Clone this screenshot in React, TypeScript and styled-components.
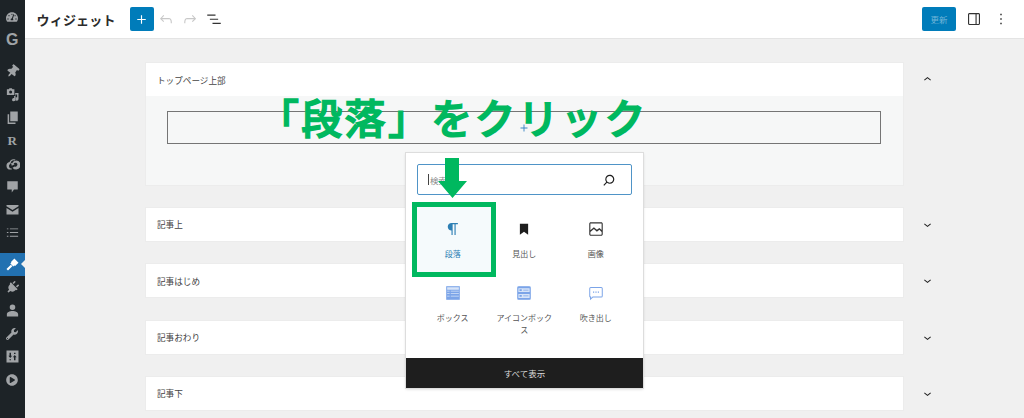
import * as React from "react";
import styled, { createGlobalStyle } from "styled-components";
import { FaTachometerAlt, FaThumbtack, FaPlug, FaWrench, FaPlayCircle } from "react-icons/fa";

const GlobalStyle = createGlobalStyle`
  html, body {
    margin: 0;
    padding: 0;
    background: #f0f0f0;
    font-family: "Noto Sans CJK JP", "Noto Sans", sans-serif;
  }
`;

const Page = styled.div`
  position: relative;
  display: flex;
  width: 1024px;
  height: 418px;
  overflow: hidden;
`;

const Sidebar = styled.nav`
  flex: 0 0 24.5px;
  display: flex;
  flex-direction: column;
  padding-top: 5px;
  background: #1d2327;
`;

const SideItem = styled.div<{ $active?: boolean; $gap?: boolean }>`
  position: relative;
  height: 23px;
  margin-top: ${(p) => (p.$gap ? "9px" : "0")};
  display: flex;
  align-items: center;
  justify-content: center;
  font-size: 12px;
  color: ${(p) => (p.$active ? "#fff" : "#a0a3a6")};
  background: ${(p) => (p.$active ? "#2271b1" : "transparent")};

  &::after {
    content: "";
    display: ${(p) => (p.$active ? "block" : "none")};
    position: absolute;
    right: 0;
    top: 7px;
    border: 4px solid transparent;
    border-right-color: #f0f0f0;
    border-left-width: 0;
  }
`;

const LetterIcon = styled.span<{ $serif?: boolean }>`
  font-family: ${(p) => (p.$serif ? '"Liberation Serif", serif' : '"Liberation Sans", sans-serif')};
  font-weight: 700;
  font-size: ${(p) => (p.$serif ? "13px" : "16px")};
  line-height: 1;
`;

const TiltedPin = styled(FaThumbtack)`
  font-size: 13px;
  transform: rotate(40deg);
`;

const TiltedPlug = styled(FaPlug)`
  font-size: 13px;
  transform: rotate(45deg);
`;

const Main = styled.div`
  flex: 1;
  display: flex;
  flex-direction: column;
  min-width: 0;
`;

const Header = styled.header`
  height: 39px;
  box-sizing: border-box;
  display: flex;
  align-items: center;
  justify-content: space-between;
  padding: 0 11px 0 12px;
  background: #fff;
  border-bottom: 1px solid #e4e4e4;
`;

const HeaderGroup = styled.div<{ $gap?: number }>`
  display: flex;
  align-items: center;
  gap: ${(p) => p.$gap ?? 0}px;
`;

const Title = styled.h1`
  margin: 0 15px 0 0;
  width: 78px;
  font-size: 13px;
  font-weight: 700;
  white-space: nowrap;
  letter-spacing: 0.2px;
  color: #2b2b2b;
`;

const AddButton = styled.button`
  width: 24px;
  height: 24px;
  padding: 0;
  border: 0;
  border-radius: 2px;
  display: flex;
  align-items: center;
  justify-content: center;
  background: #007cba;
`;

const SaveButton = styled.button`
  width: 34px;
  height: 24px;
  padding: 0;
  margin-right: 3px;
  border: 0;
  border-radius: 2px;
  font-family: inherit;
  font-size: 8.5px;
  background: #007cba;
  color: #72b5d8;
`;

const ToolIcon = styled.svg<{ $muted?: boolean }>`
  width: 18px;
  height: 18px;
  margin: 0 3px;
  fill: ${(p) => (p.$muted ? "#c8c8c8" : "#333")};
`;

const Content = styled.main`
  display: flex;
  flex-direction: column;
  gap: 23.3px;
  padding: 24px 89.5px 0 121.5px;
`;

const AreaRow = styled.div`
  display: flex;
  align-items: flex-start;
`;

const Card = styled.section`
  flex: 1;
  min-width: 0;
  background: #fff;
  box-shadow: 0 0 0 1px #ececec;
`;

const CardHead = styled.div`
  height: 33px;
  display: flex;
  align-items: center;
  padding-left: 11px;
  font-size: 8.6px;
  color: #444;
`;

const Chevron = styled.svg`
  flex: none;
  width: 15px;
  height: 15px;
  margin: 9px 0 0 16.5px;
  fill: #1e1e1e;
`;

const CardBody = styled.div`
  height: 88.7px;
  box-sizing: border-box;
  padding: 15px 22px 0 21px;
  background: #f6f7f7;
`;

const BlockSlot = styled.div`
  height: 33px;
  box-sizing: border-box;
  display: flex;
  align-items: center;
  justify-content: center;
  border: 1px solid #757575;
`;

const SlotPlus = styled.svg`
  position: relative;
  z-index: 1;
  width: 14px;
  height: 14px;
  fill: #3c86c4;
`;

const Popover = styled.div`
  position: absolute;
  left: 406px;
  top: 153px;
  width: 237px;
  height: 235px;
  box-sizing: border-box;
  display: flex;
  flex-direction: column;
  background: #fff;
  box-shadow: 0 0 0 1px #ddd, 0 1px 3px rgba(0, 0, 0, 0.2);
`;

const SearchBox = styled.div`
  margin: 11px 11px 0 11px;
  height: 31px;
  box-sizing: border-box;
  display: flex;
  align-items: center;
  padding: 0 13px 0 10px;
  border: 1px solid #4f94c7;
  border-radius: 2px;
  font-size: 8.5px;
  color: #8a8a8a;
`;

const Caret = styled.span`
  width: 1px;
  height: 11px;
  margin-right: 1px;
  background: #444;
`;

const SearchIcon = styled.svg`
  width: 18px;
  height: 18px;
  margin-left: auto;
  fill: #1e1e1e;
`;

const BlockGrid = styled.div`
  flex: 1;
  display: grid;
  grid-template-columns: repeat(3, 71.5px);
  grid-auto-rows: 64px;
  padding: 12px 0 0 11px;
`;

const BlockItem = styled.div<{ $active?: boolean }>`
  display: flex;
  flex-direction: column;
  align-items: center;
  padding: 13px 7px 0;
  font-size: 8px;
  line-height: 12px;
  text-align: center;
  color: ${(p) => (p.$active ? "#2f7fb5" : "#555")};
`;

const BlockIcon = styled.svg<{ $color: string }>`
  width: 18px;
  height: 18px;
  margin-bottom: 10px;
  flex: none;
  fill: ${(p) => p.$color};
`;

const ShowAll = styled.div`
  height: 30px;
  display: flex;
  align-items: center;
  justify-content: center;
  background: #1e1e1e;
  color: #ddd;
  font-size: 8.5px;
`;

const Highlight = styled.div`
  position: absolute;
  left: 412px;
  top: 202px;
  width: 84px;
  height: 75px;
  box-sizing: border-box;
  border: 5px solid #00b85f;
  background: rgba(0, 124, 186, 0.04);
`;

const Arrow = styled.svg`
  position: absolute;
  left: 438px;
  top: 158px;
  width: 29px;
  height: 40px;
  fill: #00b85f;
`;

const Callout = styled.div`
  position: absolute;
  left: 258px;
  top: 88px;
  font-size: 41px;
  line-height: 56px;
  font-weight: 500;
  letter-spacing: 2.3px;
  white-space: nowrap;
  color: #00b85f;
  -webkit-text-stroke: 1.5px #00b85f;
  stroke-linejoin: round;
`;

const paths = {
  plus: "M18 11.2h-5.2V6h-1.6v5.2H6v1.6h5.2V18h1.6v-5.2H18z",
  undo: "M18.3 11.7c-.6-.6-1.4-.9-2.3-.9H6.7l2.9-3.3-1.1-1-4.5 5L8.5 16l1-1-2.7-2.7H16c.5 0 .9.2 1.3.5 1 1 1 3.4 1 4.5v.3h1.5v-.2c0-1.5 0-4.3-1.5-5.7z",
  redo: "M15.6 6.5l-1.1 1 2.9 3.3H8c-.9 0-1.7.3-2.3.9-1.4 1.5-1.4 4.2-1.4 5.6v.2h1.5v-.3c0-1.1 0-3.5 1-4.5.3-.3.7-.5 1.3-.5h9.2L14.5 15l1.1 1.1 4.6-4.6-4.6-5z",
  list: "M3 6h11v1.5H3V6Zm3.5 5.5h11V13h-11v-1.5ZM21 17H10v1.5h11V17Z",
  sidebar:
    "M18 4H6c-1.1 0-2 .9-2 2v12c0 1.1.9 2 2 2h12c1.1 0 2-.9 2-2V6c0-1.1-.9-2-2-2zM5.5 18V6c0-.3.2-.5.5-.5h8v13H6c-.3 0-.5-.2-.5-.5zm13 0c0 .3-.2.5-.5.5h-2.5v-13H18c.3 0 .5.2.5.5v12z",
  kebab: "M13 19h-2v-2h2v2zm0-6h-2v-2h2v2zm0-6h-2V5h2v2z",
  up: "M6.5 12.4L12 8l5.5 4.4-.9 1.2L12 10l-4.5 3.6-1-1.2z",
  down: "M17.5 11.6L12 16l-5.5-4.4.9-1.2L12 14l4.5-3.6 1 1.2z",
  search:
    "M13 5c-3.3 0-6 2.7-6 6 0 1.4.5 2.7 1.3 3.7l-3.8 3.8 1.1 1.1 3.8-3.8c1 .8 2.3 1.3 3.7 1.3 3.3 0 6-2.7 6-6S16.3 5 13 5zm0 10.5c-2.5 0-4.5-2-4.5-4.5s2-4.5 4.5-4.5 4.5 2 4.5 4.5-2 4.5-4.5 4.5z",
  paragraph: "M10 14v6h1.5V5.5H14V20h1.5V5.5h3V4H10c-2.76 0-5 2.24-5 5s2.24 5 5 5z",
  bookmark: "M6.5 5h11v14.5L12 15.5l-5.5 4z",
  image:
    "M19 3H5c-1.1 0-2 .9-2 2v14c0 1.1.9 2 2 2h14c1.1 0 2-.9 2-2V5c0-1.1-.9-2-2-2zM5 4.5h14c.3 0 .5.2.5.5v8.4l-3-2.9-3.3 2.6-4-3.6-4.7 4V5c0-.3.2-.5.5-.5zm14 15H5c-.3 0-.5-.2-.5-.5v-3l4.7-4 4 3.6 3.3-2.6 3 2.9V19c0 .3-.2.5-.5.5z",
  box: "M3 3h18v18H3V3zm1.2 1.2v3.3h15.6V4.2H4.2zm0 4.8v.9h3.3V9H4.2zm4.8 0v.9h10.8V9H9zm-4.8 3.4v.9h3.3v-.9H4.2zm4.8 0v.9h10.8v-.9H9zm-4.8 3.4v.9h3.3v-.9H4.2zm4.8 0v.9h10.8v-.9H9z",
  iconBox:
    "M5 3h14a2 2 0 0 1 2 2v14a2 2 0 0 1-2 2H5a2 2 0 0 1-2-2V5a2 2 0 0 1 2-2zm-.5 2.5v5.3h15V5.5h-15zm0 7.7v5.3h15v-5.3h-15zM6 7h3v2.3H6V7zm5 .7h7v1h-7v-1zM6 14.7h3V17H6v-2.3zm5 .7h7v1h-7v-1z",
  balloon:
    "M5 4h14a2 2 0 0 1 2 2v10a2 2 0 0 1-2 2H8l-4 3.5V18A2 2 0 0 1 3 16V6a2 2 0 0 1 2-2zm0 1.3a.7.7 0 0 0-.7.7v10c0 .4.3.7.7.7h.5v1.9l2-1.9H19a.7.7 0 0 0 .7-.7V6a.7.7 0 0 0-.7-.7H5zM8 10h1.6v1.6H8V10zm3.2 0h1.6v1.6h-1.6V10zm3.2 0H16v1.6h-1.6V10z",
  media:
    "M2.5 3H5l1-1.3h3L10 3h2.5v7.5h-10V3zm5 1.8a2 2 0 1 0 0 4 2 2 0 0 0 0-4zM18 8v8a2.3 2.3 0 1 1-1.8-2.2V10H14v6.800a2.3 2.3 0 1 1-1.8-2.2V12h1.300V8H18z",
  pages: "M7 2h10v13H7V2zM3.5 5.5h2v11h8.500v2H3.500v-13z",
  cloud:
    "M7 18a5 5 0 0 1-1-9.900 6 6 0 0 1 8-3.400l-1 1.400a4.500 4.500 0 0 0-5.600 3.400l-.2.700a3.400 3.400 0 0 0 .6 6.300H9v1.500H7zM15 6a6 6 0 1 1-5 9.500l3-1.500a2.600 2.600 0 1 0-1.500-3.500l1.500.5-4 2-1-4 1.500.7A6 6 0 0 1 15 6z",
  comment: "M3 3h14v11h-5l-3 4v-4H3V3z",
  mail: "M2 4h16v1.500l-8 5-8-5V4zM2 8l8 5 8-5v8.500H2V8z",
  lines:
    "M2.500 4.500h2v1.300h-2zM6.500 4.500h11v1.300h-11zM2.500 9.300h2v1.300h-2zM6.500 9.300h11v1.300h-11zM2.500 14.200h2v1.300h-2zM6.500 14.200h11v1.300h-11z",
  brush:
    "M8 6.500 12.500 2l5.500 5.500L13.500 12l-1.200-.7-1.200 1.300-4-4 1.300-1.200zM7.800 10.200l2 2L4 18l-2-2 5.800-5.800z",
  user: "M10 2a3.700 3.700 0 1 1 0 7.400A3.700 3.700 0 0 1 10 2zM2.500 18v-3.300C2.500 12.300 6 10.500 10 10.500s7.500 1.800 7.500 4.200V18h-15z",
  sliders:
    "M2 2h16v16H2V2zm4 3v4H4.500L7 12l2.500-3H8V5H6zm6 10h2v-4h1.500L13 8l-2.500 3H12v4zM6 13.500V15h2v-1.500H6zM12 5v1.500h2V5h-2z",
};

const Tool = ({ d, muted }: { d: string; muted?: boolean }) => (
  <ToolIcon viewBox="0 0 24 24" $muted={muted}>
    <path d={d} />
  </ToolIcon>
);

const SmallSvg = ({ d }: { d: string }) => (
  <svg viewBox="0 0 20 20" width="15" height="15" fill="currentColor">
    <path d={d} fillRule="evenodd" />
  </svg>
);

const sideItems: { key: string; node: React.ReactNode; gap?: boolean; active?: boolean }[] = [
  { key: "dash", node: <FaTachometerAlt /> },
  { key: "g", node: <LetterIcon>G</LetterIcon> },
  { key: "pin", node: <TiltedPin />, gap: true },
  { key: "media", node: <SmallSvg d={paths.media} /> },
  { key: "pages", node: <SmallSvg d={paths.pages} /> },
  { key: "r", node: <LetterIcon $serif>R</LetterIcon> },
  { key: "cloud", node: <SmallSvg d={paths.cloud} /> },
  { key: "comment", node: <SmallSvg d={paths.comment} /> },
  { key: "mail", node: <SmallSvg d={paths.mail} /> },
  { key: "list", node: <SmallSvg d={paths.lines} /> },
  { key: "brush", node: <SmallSvg d={paths.brush} />, gap: true, active: true },
  { key: "plug", node: <TiltedPlug /> },
  { key: "user", node: <SmallSvg d={paths.user} /> },
  { key: "wrench", node: <FaWrench /> },
  { key: "sliders", node: <SmallSvg d={paths.sliders} /> },
  { key: "play", node: <FaPlayCircle /> },
];

const tintRect = "M3 3h18v18H3z";

const blocks = [
  { label: "段落", d: paths.paragraph, color: "#2f7fb5", active: true },
  { label: "見出し", d: paths.bookmark, color: "#1e1e1e" },
  { label: "画像", d: paths.image, color: "#333" },
  { label: "ボックス", d: paths.box, color: "#7ba4e8", tint: tintRect },
  { label: "アイコンボックス", d: paths.iconBox, color: "#7ba4e8", tint: tintRect },
  { label: "吹き出し", d: paths.balloon, color: "#7ba4e8" },
];

const closedAreas = ["記事上", "記事はじめ", "記事おわり", "記事下"];

export default function App(): JSX.Element {
  return (
    <Page>
      <GlobalStyle />
      <Sidebar>
        {sideItems.map((item) => (
          <SideItem key={item.key} $gap={item.gap} $active={item.active}>
            {item.node}
          </SideItem>
        ))}
      </Sidebar>

      <Main>
        <Header>
          <HeaderGroup>
            <Title>ウィジェット</Title>
            <AddButton>
              <svg viewBox="0 0 24 24" width="17" height="17" fill="#fff">
                <path d={paths.plus} />
              </svg>
            </AddButton>
            <Tool d={paths.undo} muted />
            <Tool d={paths.redo} muted />
            <Tool d={paths.list} />
          </HeaderGroup>
          <HeaderGroup $gap={3}>
            <SaveButton>更新</SaveButton>
            <Tool d={paths.sidebar} />
            <Tool d={paths.kebab} />
          </HeaderGroup>
        </Header>

        <Content>
          <AreaRow>
            <Card>
              <CardHead>トップページ上部</CardHead>
              <CardBody>
                <BlockSlot>
                  <SlotPlus viewBox="0 0 24 24">
                    <path d={paths.plus} />
                  </SlotPlus>
                </BlockSlot>
              </CardBody>
            </Card>
            <Chevron viewBox="0 0 24 24">
              <path d={paths.up} />
            </Chevron>
          </AreaRow>
          {closedAreas.map((name) => (
            <AreaRow key={name}>
              <Card>
                <CardHead>{name}</CardHead>
              </Card>
              <Chevron viewBox="0 0 24 24">
                <path d={paths.down} />
              </Chevron>
            </AreaRow>
          ))}
        </Content>
      </Main>

      <Popover>
        <SearchBox>
          <Caret />
          検索
          <SearchIcon viewBox="0 0 24 24">
            <path d={paths.search} />
          </SearchIcon>
        </SearchBox>
        <BlockGrid>
          {blocks.map((block) => (
            <BlockItem key={block.label} $active={block.active}>
              <BlockIcon viewBox="0 0 24 24" $color={block.color}>
                {block.tint && <path d={block.tint} opacity={0.3} />}
                <path d={block.d} fillRule="evenodd" />
              </BlockIcon>
              {block.label}
            </BlockItem>
          ))}
        </BlockGrid>
        <ShowAll>すべて表示</ShowAll>
      </Popover>

      <Callout>「段落」をクリック</Callout>
      <Highlight />
      <Arrow viewBox="0 0 29 40">
        <path d="M7 0h14v23h8L14.5 40 0 23h7z" />
      </Arrow>
    </Page>
  );
}
